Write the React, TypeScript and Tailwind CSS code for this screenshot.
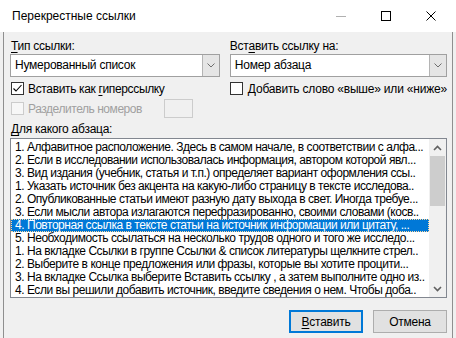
import React from "react";

const rows = [
  "1. Алфавитное расположение. Здесь в самом начале, в соответствии с алфа...",
  "2. Если в исследовании использовалась информация, автором которой явл...",
  "3. Вид издания (учебник, статья и т.п.) определяет вариант оформления ссы..",
  "1. Указать источник без акцента на какую-либо страницу в тексте исследова..",
  "2. Опубликованные статьи имеют разную дату выхода в свет. Иногда требуе...",
  "3. Если мысли автора излагаются перефразированно, своими словами (косв..",
  "4. Повторная ссылка в тексте статьи на источник информации или цитату, ...",
  "5. Необходимость ссылаться на несколько трудов одного и того же исследо...",
  "1. На вкладке Ссылки в группе Ссылки & список литературы щелкните стрел..",
  "2. Выберите в конце предложения или фразы, которые вы хотите процити...",
  "3. На вкладке Ссылка выберите Вставить ссылку , а затем выполните одно из..",
  "4. Если вы решили добавить источник, введите сведения о нем. Чтобы доба..",
];

function Chevron({ up = false }: { up?: boolean }) {
  return (
    <svg width="9" height="6" viewBox="0 0 9 6" className="block">
      <polyline
        points={up ? "1,5 4.5,1.5 8,5" : "1,1 4.5,4.5 8,1"}
        fill="none"
        stroke="#606060"
        strokeWidth="1.6"
      />
    </svg>
  );
}

function Combo({ text }: { text: string }) {
  return (
    <div className="h-[23px] flex border border-[#a0a0a0] bg-white">
      <div className="flex-1 pl-[4px] flex items-center text-black leading-[15px] whitespace-nowrap">{text}</div>
      <div className="w-[17px] bg-[#e5e5e5] border-l border-[#b4b4b4] flex items-center justify-center">
        <svg width="8" height="5" viewBox="0 0 8 5" className="block">
          <polyline points="0.5,0.5 4,4 7.5,0.5" fill="none" stroke="#6d6d6d" strokeWidth="1" />
        </svg>
      </div>
    </div>
  );
}

function Check({ checked = false, disabled = false }: { checked?: boolean; disabled?: boolean }) {
  return (
    <div
      className={
        disabled
          ? "w-[13px] h-[13px] border border-[#cccccc] bg-[#f7f7f7] shrink-0"
          : "w-[13px] h-[13px] border border-[#333333] bg-white shrink-0 flex items-center justify-center"
      }
    >
      {checked && (
        <svg width="11" height="11" viewBox="0 0 11 11" className="block">
          <polyline points="1.5,5.5 4,8 9.5,2" fill="none" stroke="#000" strokeWidth="1.1" />
        </svg>
      )}
    </div>
  );
}

export default function App() {
  return (
    <div
      className="w-[456px] h-[338px] bg-[#f0f0f0] flex flex-col overflow-hidden text-[12px] text-black"
      style={{ fontFamily: '"Liberation Sans", Arial, sans-serif' }}
    >
      <div className="h-[32px] bg-white flex items-center shrink-0">
        <span className="ml-[12px] leading-[16px] whitespace-nowrap">Перекрестные ссылки</span>
        <div className="ml-auto mr-[3px] flex h-full">
          <div className="w-[45px] h-full flex items-center justify-center">
            <div className="w-[10px] h-px bg-[#b0b0b0]" />
          </div>
          <div className="w-[45px] h-full flex items-center justify-center">
            <div className="w-[10px] h-[10px] border border-black" />
          </div>
          <div className="w-[45px] h-full flex items-center justify-center">
            <svg width="10" height="10" viewBox="0 0 10 10" className="block">
              <path d="M0.5,0.5 L9.5,9.5 M9.5,0.5 L0.5,9.5" stroke="#000" strokeWidth="1" />
            </svg>
          </div>
        </div>
      </div>

      <div className="flex-1 ml-[3px] w-[450px] border-x border-[#8f8f8f] pl-[6px] pr-[5px] pt-[7px] flex flex-col tracking-[-0.25px]">
        <div className="flex gap-[10px]">
          <div className="w-[211px] flex flex-col">
            <div className="h-[15px] leading-[15px] pl-[1px] whitespace-nowrap">
              <span className="underline underline-offset-2">Т</span>ип ссылки:
            </div>
            <Combo text="Нумерованный список" />
            <div className="mt-[1px] h-[21px] flex items-center pl-[1px] gap-[4px] whitespace-nowrap">
              <Check checked />
              <span className="tracking-[-0.35px]">
                Вставить как <span className="underline underline-offset-2">г</span>иперссылку
              </span>
            </div>
            <div className="h-[19px] flex items-center pl-[1px] whitespace-nowrap">
              <Check disabled />
              <span className="ml-[4px] text-[#a0a0a0] tracking-[-0.45px]">Разделитель номеров</span>
              <div className="ml-auto mr-[27px] w-[29px] h-[19px] border border-[#cccccc] bg-[#f0f0f0]" />
            </div>
          </div>
          <div className="flex-1 flex flex-col">
            <div className="h-[15px] leading-[15px] whitespace-nowrap">
              Вст<span className="underline underline-offset-2">а</span>вить ссылку на:
            </div>
            <Combo text="Номер абзаца" />
            <div className="mt-[1px] h-[21px] flex items-center gap-[5px] whitespace-nowrap">
              <Check />
              <span className="tracking-[-0.2px]">
                <span className="underline underline-offset-2">Д</span>обавить слово «выше» или «ниже»
              </span>
            </div>
          </div>
        </div>

        <div className="mt-[4px] h-[15px] leading-[15px] pl-[1px] whitespace-nowrap">
          <span className="underline underline-offset-2">Д</span>ля какого абзаца:
        </div>

        <div className="mt-[1px] h-[160px] border border-[#828790] bg-white flex">
          <div className="flex-1 min-w-0 pt-[2px] overflow-hidden tracking-[-0.46px]">
            {rows.map((r, i) =>
              i === 6 ? (
                <div
                  key={i}
                  className="h-[13px] leading-[13px] pl-[4px] pr-[1px] bg-[#0078d7] text-white whitespace-nowrap overflow-hidden text-ellipsis outline outline-1 outline-dotted outline-[#ffd9a0] -outline-offset-1"
                >
                  {r}
                </div>
              ) : (
                <div key={i} className="h-[13px] leading-[13px] pl-[4px] pr-[1px] whitespace-nowrap overflow-hidden text-ellipsis">
                  {r}
                </div>
              )
            )}
          </div>
          <div className="w-[17px] bg-[#f0f0f0] flex flex-col">
            <div className="h-[17px] flex items-center justify-center">
              <Chevron up />
            </div>
            <div className="flex-1 flex flex-col items-center">
              <div className="w-[15px] h-[50px] bg-[#cdcdcd]" />
            </div>
            <div className="h-[17px] flex items-center justify-center">
              <Chevron />
            </div>
          </div>
        </div>

        <div className="mt-[12px] flex justify-end gap-[10px]">
          <div className="w-[74px] h-[23px] border-2 border-[#0078d7] bg-[#e1e1e1] flex items-center justify-center">
            <span>
              <span className="underline underline-offset-2">В</span>ставить
            </span>
          </div>
          <div className="w-[74px] h-[23px] border border-[#adadad] bg-[#e1e1e1] flex items-center justify-center">
            Отмена
          </div>
        </div>
      </div>
    </div>
  );
}
